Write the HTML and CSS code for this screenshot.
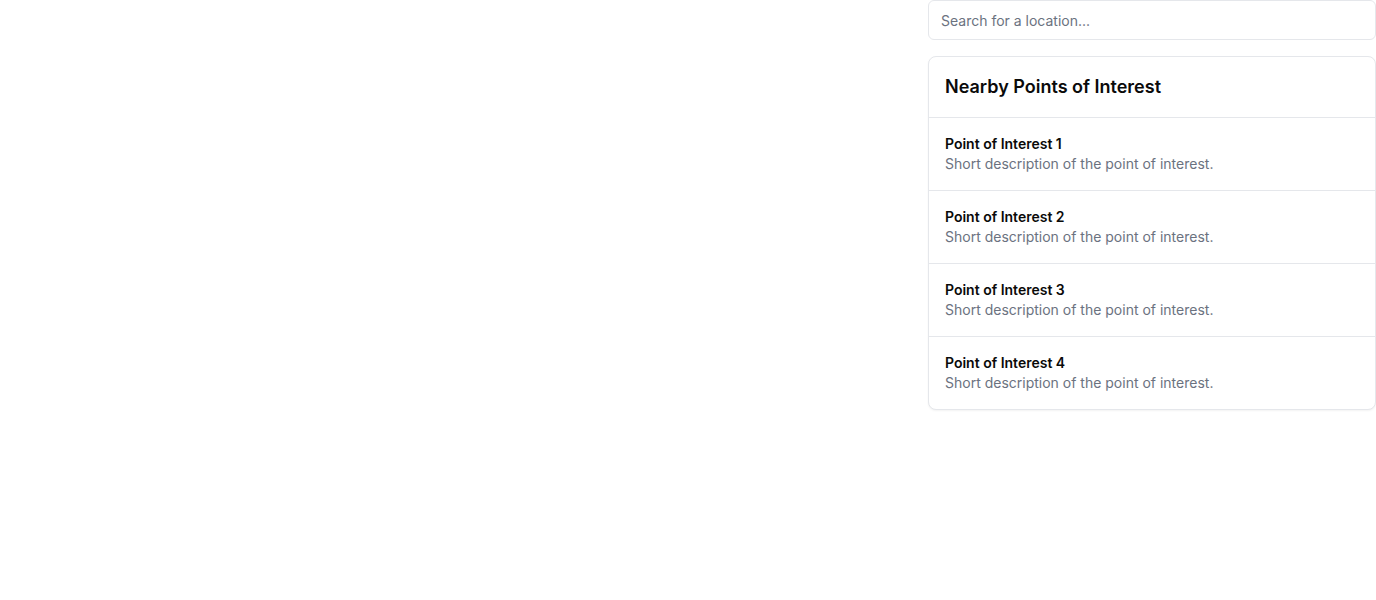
FILE: index.html
```html
<!DOCTYPE html>
<html lang="en">
<head>
<meta charset="utf-8">
<title>Nearby Points of Interest</title>
<link rel="stylesheet" href="styles.css">
</head>
<body>
<div class="layout">
  <main class="map"></main>
  <aside class="sidebar">
    <input class="search" type="text" placeholder="Search for a location...">
    <section class="card">
      <header class="card-header">
        <h2 class="card-title">Nearby Points of Interest</h2>
      </header>
      <ul class="poi-list">
        <li class="poi">
          <div class="poi-name">Point of Interest 1</div>
          <div class="poi-desc">Short description of the point of interest.</div>
        </li>
        <li class="poi">
          <div class="poi-name">Point of Interest 2</div>
          <div class="poi-desc">Short description of the point of interest.</div>
        </li>
        <li class="poi">
          <div class="poi-name">Point of Interest 3</div>
          <div class="poi-desc">Short description of the point of interest.</div>
        </li>
        <li class="poi">
          <div class="poi-name">Point of Interest 4</div>
          <div class="poi-desc">Short description of the point of interest.</div>
        </li>
      </ul>
    </section>
  </aside>
</div>
</body>
</html>
```
FILE: styles.css
```css
* { box-sizing: border-box; }
html, body { margin: 0; padding: 0; background: #fff; }
body {
  font-family: Inter, "Noto Sans", sans-serif;
  color: #0a0a0a;
  -webkit-font-smoothing: antialiased;
}
.layout {
  display: flex;
  min-height: 600px;
}
.map { flex: 1; }
.sidebar {
  width: 448px;
  display: flex;
  flex-direction: column;
  gap: 16px;
  align-items: stretch;
  align-self: flex-start;
}
.search {
  display: block;
  width: 100%;
  height: 40px;
  margin: 0;
  padding: 0 12px;
  border: 1px solid #e5e7eb;
  border-radius: 6px;
  font-family: inherit;
  font-size: 14px;
  color: #0a0a0a;
  background: #fff;
  outline: none;
}
.search::placeholder { color: #6b7280; }
.card {
  border: 1px solid #e5e7eb;
  border-radius: 8px;
  background: #fff;
  box-shadow: 0 1px 2px rgba(0,0,0,0.05);
  overflow: hidden;
}
.card-header {
  padding: 16px;
  border-bottom: 1px solid #e5e7eb;
}
.card-title {
  margin: 0;
  font-size: 18px;
  line-height: 28px;
  font-weight: 600;
}
.poi-list {
  list-style: none;
  margin: 0;
  padding: 0;
}
.poi {
  padding: 16px;
  border-bottom: 1px solid #e5e7eb;
}
.poi:last-child { border-bottom: none; }
.poi-name {
  font-size: 14px;
  line-height: 20px;
  font-weight: 600;
}
.poi-desc {
  font-size: 14px;
  line-height: 20px;
  color: #6b7280;
}
```
